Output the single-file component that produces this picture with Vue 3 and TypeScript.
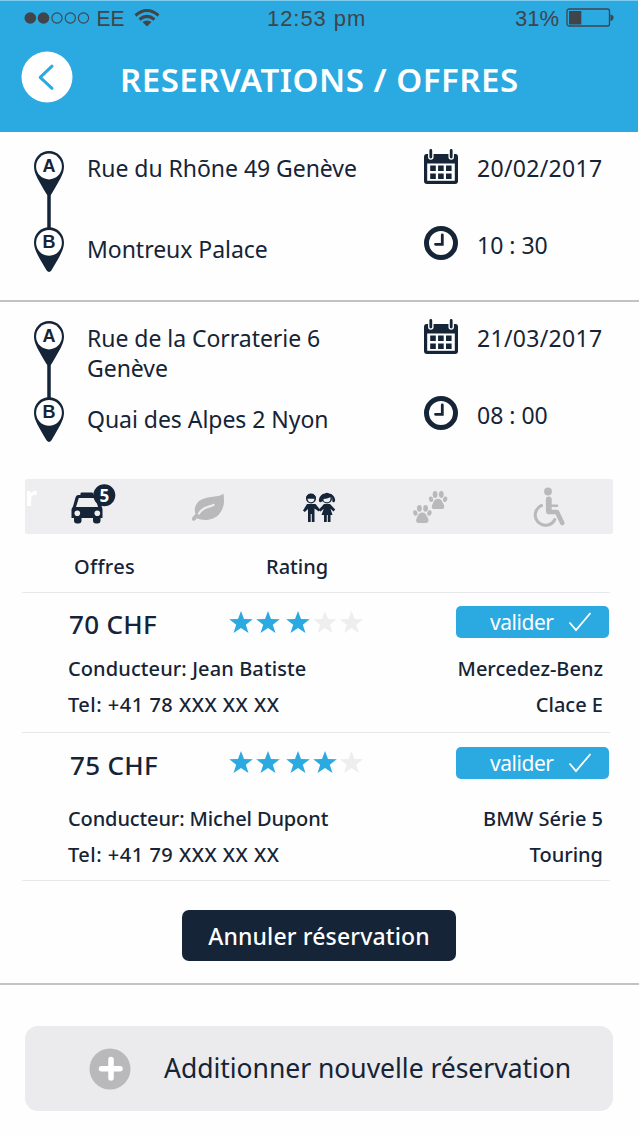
<script setup lang="ts">
interface Trip {
  from: string[]
  to: string
  date: string
  time: string
}

interface Offer {
  price: string
  rating: number
  driver: string
  phone: string
  car: string
  model: string
}

const trips: Trip[] = [
  { from: ['Rue du Rhõne 49 Genève'], to: 'Montreux Palace', date: '20/02/2017', time: '10 : 30' },
  { from: ['Rue de la Corraterie 6', 'Genève'], to: 'Quai des Alpes 2 Nyon', date: '21/03/2017', time: '08 : 00' },
]

const offers: Offer[] = [
  { price: '70 CHF', rating: 3, driver: 'Jean Batiste', phone: '+41 78 XXX XX XX', car: 'Mercedez-Benz', model: 'Clace E' },
  { price: '75 CHF', rating: 4, driver: 'Michel Dupont', phone: '+41 79 XXX XX XX', car: 'BMW Série 5', model: 'Touring' },
]

const starCentres = [12, 39, 69, 96, 122.5]
const star = 'M0-12 3-4 11.8-3.8 4.8 1.7 7.5 10 0 5 -7.5 10-4.8 1.7-11.8-3.8-3-4Z'
</script>

<template>
  <main class="screen">
    <header class="header">
      <div class="status">
        <svg class="signal" viewBox="0 0 160 36">
          <g fill="#414449">
            <circle cx="30.3" cy="18" r="5.8" />
            <circle cx="43.5" cy="18" r="5.8" />
          </g>
          <g fill="none" stroke="#414449" stroke-width="1.1">
            <circle cx="57" cy="18" r="5.1" />
            <circle cx="70.3" cy="18" r="5.1" />
            <circle cx="83.5" cy="18" r="5.1" />
          </g>
          <text x="96.500" y="26" textLength="28" lengthAdjust="spacingAndGlyphs">EE</text>
          <g fill="none" stroke="#414449" stroke-width="3">
            <path d="M135.500 15.500Q147 5.500 158.500 15.500" />
            <path d="M139.500 19.500Q147 13.300 154.500 19.500" />
          </g>
          <path d="M142.500 22Q147 18.800 151.500 22L147 26.500Z" fill="#414449" />
        </svg>
        <span class="clock-text">12:53 pm</span>
        <span class="percent">31%</span>
        <svg class="battery" viewBox="0 0 49 20">
          <rect x="1" y="1" width="42.500" height="17" rx="2" fill="none" stroke="#414449" stroke-width="1.300" />
          <rect x="3" y="3" width="12.300" height="13.500" fill="#414449" />
          <path d="M44.500 6.500Q47.600 7 47.600 9.600T44.500 13Z" fill="#414449" />
        </svg>
      </div>
      <div class="titlebar">
        <svg class="back" viewBox="0 0 52 52">
          <circle cx="26" cy="26" r="25.500" fill="#fff" />
          <path d="M31 15.200 19.200 26.300 31 37.300" fill="none" stroke="#2ba9e1" stroke-width="3" stroke-linecap="round" stroke-linejoin="round" />
        </svg>
        <h1>RESERVATIONS / OFFRES</h1>
      </div>
    </header>

    <section v-for="(trip, i) in trips" :key="i" class="trip" :class="{ first: i === 0 }">
      <svg class="route" viewBox="0 0 32 122">
        <path d="M16 40V80" stroke="#152436" stroke-width="3.500" />
        <g v-for="(letter, n) in ['A', 'B']" :key="letter" :transform="`translate(0 ${n * 76.300})`">
          <path d="M16 0C7.500 0 1 6.700 1 15.500C1 23 6 30 13.500 43Q16 46.500 18.500 43C26 30 31 23 31 15.500C31 6.700 24.500 0 16 0Z" fill="#152436" />
          <circle cx="16" cy="15.500" r="12.900" fill="#fff" />
          <text x="16" y="21" text-anchor="middle">{{ letter }}</text>
        </g>
      </svg>
      <div class="places">
        <div class="from"><div v-for="line in trip.from" :key="line">{{ line }}</div></div>
        <div>{{ trip.to }}</div>
      </div>
      <div class="icons">
        <svg viewBox="0 0 36 36" width="36" height="36">
          <path d="M3.500 5H32.500Q35 5 35 8V32Q35 35 32 35H4Q1 35 1 32V8Q1 5 3.500 5Z" fill="#152436" />
          <path d="M4.200 14.500H31.800V31.800H4.200Z" fill="#fff" />
          <g stroke-linecap="round" fill="none">
            <path d="M7.800 2V8M28.200 2V8" stroke="#fff" stroke-width="5.500" />
            <path d="M7.800 1.500V8M28.200 1.500V8" stroke="#152436" stroke-width="2.800" />
          </g>
          <path d="M7.200 16.500h5.600v5.500H7.200zm7.900 0h5.600v5.500h-5.600zm7.900 0h5.600v5.500H23zM7.200 24.500h5.600v5.500H7.200zm7.900 0h5.600v5.500h-5.600zm7.900 0h5.600v5.500H23z" fill="#152436" />
        </svg>
        <svg viewBox="0 0 36 36" width="36" height="36">
          <circle cx="18" cy="18" r="14.500" fill="none" stroke="#152436" stroke-width="5" />
          <path d="M19.300 10V19.300H12.500" fill="none" stroke="#152436" stroke-width="2.800" stroke-linecap="round" />
        </svg>
      </div>
      <div class="when">
        <div class="date">{{ trip.date }}</div>
        <div class="time">{{ trip.time }}</div>
      </div>
    </section>

    <nav class="options">
      <svg viewBox="25 479 125 55">
        <text class="cut" x="25" y="506">r</text>
        <g fill="#152436">
          <path d="M80.500 496V493.500Q80.500 492.500 82 492.500H92Q93.500 492.500 93.500 494V496Z" />
          <path d="M78 495H96Q98.500 495 99.300 497L101.500 506Q102.500 508 102.500 510V518H71.500V510Q71.500 508 73 506.500L75.500 497.500Q76.200 495 78 495Z" />
          <rect x="74" y="514" width="7.500" height="9.500" rx="3" />
          <rect x="93" y="514" width="7.500" height="9.500" rx="3" />
        </g>
        <path d="M78.800 498H95.500L98 507H76Z" fill="#eeedf0" />
        <circle cx="77.300" cy="513.300" r="2.800" fill="#eeedf0" />
        <circle cx="97.300" cy="513.300" r="2.800" fill="#eeedf0" />
        <circle cx="104.300" cy="495.300" r="11" fill="#152436" />
        <text class="badge" x="104.300" y="502" text-anchor="middle">5</text>
      </svg>
      <svg viewBox="150 479 115 55">
        <path d="M223.500 493.500C220 498 207 495 199 501C194.500 505.500 194 510 195.500 514L192.500 517Q191 520 193.500 521Q195.500 521 196.800 518.300C204 521.500 215 520.500 220 513C224.500 507 224.500 501 223.500 493.500Z" fill="#b9b8bb" />
        <path d="M199 513.500C203 506.500 208 507.500 213.500 505" fill="none" stroke="#eeedf0" stroke-width="2.200" stroke-linecap="round" />
      </svg>
      <svg viewBox="265 479 110 55">
        <g fill="#152436">
          <circle cx="311" cy="498.500" r="5" />
          <path d="M306 500Q305.500 494 311 494Q316.500 494 316 500L315 497.500H307Z" />
          <path d="M307 504H315.500L320 509.500 318.800 511.500 314.500 508.500V522H311.800V514H310.700V522H308V509L304.800 512 303 510.500Z" />
          <circle cx="327" cy="498.500" r="5" />
          <path d="M321 502Q319 503 318.800 500Q320 494 325 493.500Q327 492 329 493.500Q334 494 335.200 500Q335 503 332.500 502L332 497Z" />
          <path d="M324 504H330L335.200 509.500 333.500 511.500 330.500 508.800 332.500 515H330.500V522H327.800V515H326.800V522H324V515H321.500L323.800 508.800 320.500 511.500 318.500 510Z" />
        </g>
        <path d="M307.500 498.800H314.500Q314 502.300 311 502.300T307.500 498.800ZM323.500 499Q327 499 330.500 497.200Q331 502.300 327 502.300T323.500 499Z" fill="#eeedf0" />
      </svg>
      <svg viewBox="375 479 120 55">
        <g v-for="p in [{ x: 438, y: 499.500 }, { x: 422.300, y: 513.300 }]" :key="p.x" :transform="`translate(${p.x} ${p.y})`" fill="#b9b8bb">
          <ellipse cx="-2.900" cy="-5" rx="2.400" ry="3.400" />
          <ellipse cx="3.300" cy="-5" rx="2.400" ry="3.400" />
          <ellipse cx="-7" cy="-.3" rx="2.100" ry="2.800" transform="rotate(-15 -7 -.5)" />
          <ellipse cx="7.200" cy="-.3" rx="2.100" ry="2.800" transform="rotate(15 7.200 -.5)" />
          <path d="M0-.7C3.500-.7 4 2.200 5.500 4.500C7 7.500 6 9.800 3.500 9.600H-3.500C-6 9.800-7 7.500-5.400 4.500C-4 2.200-3.500-.7 0-.7Z" />
        </g>
      </svg>
      <svg viewBox="495 479 118 55">
        <circle cx="548" cy="491.500" r="3.900" fill="#b9b8bb" />
        <g fill="none" stroke="#b9b8bb" stroke-linecap="round" stroke-linejoin="round">
          <path d="M548.500 500V512H557L562.300 523" stroke-width="4.600" />
          <path d="M548.800 499.500V510" stroke-width="5.800" />
          <path d="M551 505.700H557" stroke-width="2.600" />
          <path d="M541.500 505.500A10.300 10.300 0 1 0 554.800 519.500" stroke-width="3" />
        </g>
      </svg>
    </nav>

    <section class="offers">
      <div class="columns"><span class="c-offers">Offres</span><span>Rating</span></div>
      <article v-for="(offer, i) in offers" :key="offer.price" class="offer" :class="{ tall: i === 1 }">
        <div class="summary">
          <strong class="price">{{ offer.price }}</strong>
          <svg class="stars" viewBox="0 0 136 26">
            <path v-for="(cx, n) in starCentres" :key="cx" :d="star" :transform="`translate(${cx} 14)`" :fill="n < offer.rating ? '#2ba9e1' : '#eeedf0'" />
          </svg>
          <button class="validate">
            <span>valider</span>
            <svg viewBox="0 0 24 20" width="24" height="20"><path d="M1.500 10.500 8 18 22.500 1" fill="none" stroke="#fff" stroke-width="1.800" /></svg>
          </button>
        </div>
        <div class="details">
          <div><span class="driver">Conducteur: {{ offer.driver }}</span><span>{{ offer.car }}</span></div>
          <div><span class="phone">Tel: {{ offer.phone }}</span><span>{{ offer.model }}</span></div>
        </div>
      </article>
    </section>

    <div class="cancel-area"><button class="cancel">Annuler réservation</button></div>

    <footer class="footer">
      <button class="add">
        <svg viewBox="0 0 42 42" width="42" height="42">
          <circle cx="21" cy="21" r="20.500" fill="#b9b8bb" />
          <path d="M22 11.500V30M12.500 20.700H31" stroke="#fff" stroke-width="5.500" stroke-linecap="round" />
        </svg>
        <span>Additionner nouvelle réservation</span>
      </button>
    </footer>
  </main>
</template>

<style>
body {
  margin: 0;
  background: #fefefe;
}
</style>

<style scoped>
.screen {
  width: 639px;
  height: 1136px;
  overflow: hidden;
  background: #fefefe;
  color: #152436;
  font-family: "Noto Sans", "Open Sans", sans-serif;
  white-space: nowrap;
}
svg { display: block; flex: none; }
button {
  border: 0;
  padding: 0;
  font-family: inherit;
  color: inherit;
}
.header {
  box-sizing: border-box;
  width: 638px;
  height: 132px;
  background: #2ba9e1;
  border-top: 1px solid #7acbed;
}
.status {
  display: flex;
  height: 36px;
  margin-top: -1px;
  color: #414449;
  font: 22px/37px "Liberation Sans", sans-serif;
}
.signal { width: 160px; height: 36px; }
.signal text { font: 22.500px "Liberation Sans", sans-serif; fill: #414449; }
.clock-text { width: 248px; margin-left: 107px; letter-spacing: .95px; }
.percent { width: 51px; letter-spacing: 0; }
.battery { width: 49px; height: 20px; margin-top: 8px; }
.titlebar { display: flex; padding: 15px 0 0 21px; }
.back { width: 52px; height: 52px; }
h1 {
  margin: 6px 0 0 47px;
  font-size: 33px;
  line-height: 45px;
  font-weight: 600;
  color: #fff;
  letter-spacing: .52px;
}
.trip {
  box-sizing: border-box;
  display: flex;
  height: 170px;
  padding: 17px 0 0 33px;
  font-size: 23px;
  line-height: 29.500px;
}
.trip.first { border-bottom: 2px solid #c3c3c5; }
.route { width: 32px; height: 122px; margin-top: 2px; }
.route text { font: bold 18px "Liberation Sans", sans-serif; fill: #152436; }
.places { width: 336px; padding: 5px 0 0 22px; letter-spacing: -.04px; }
.from { height: 81px; }
.icons { display: flex; flex-direction: column; gap: 40px; width: 36px; }
.when { padding: 5px 0 0 18px; }
.date { height: 77px; letter-spacing: .3px; }

.options {
  display: grid;
  grid-template-columns: 125px 115px 110px 120px 118px;
  width: 588px;
  height: 55px;
  margin: 7px 0 0 25px;
  background: #eeedf0;
  border-radius: 2px;
}
.options svg { width: 100%; height: 55px; overflow: visible; }
.cut { font: bold 27px "Noto Sans", sans-serif; fill: #fff; }
.badge { font: bold 17px "Noto Sans", sans-serif; fill: #fff; }

.offers { width: 588px; margin-left: 22px; font-weight: 500; }
.columns {
  display: flex;
  height: 58px;
  border-bottom: 1px solid #e8e7eb;
  font-size: 20px;
  line-height: 66px;
}
.c-offers { width: 192px; padding-left: 52px; letter-spacing: .3px; }
.offer {
  box-sizing: border-box;
  height: 140px;
  border-bottom: 1px solid #e8e7eb;
}
.offer.tall { height: 148px; }
.summary { display: flex; height: 58px; align-items: flex-start; padding-top: 13px; box-sizing: border-box; }
.price {
  width: 160px;
  padding-left: 47px;
  font-size: 26px;
  line-height: 37px;
  font-weight: 500;
  letter-spacing: .3px;
}
.tall .price { width: 159px; padding: 1px 0 0 48px; }
.stars { width: 136px; height: 26px; margin-top: 3px; }
.validate {
  display: flex;
  align-items: center;
  width: 153px;
  height: 32px;
  margin-left: 91px;
  background: #2ba9e1;
  border-radius: 5px;
  color: #fff;
  font-size: 21px;
  line-height: 32px;
  letter-spacing: -.45px;
}
.tall .validate { margin-top: 1px; }
.validate span { width: 78px; padding-left: 34px; text-align: left; }
.details { font-size: 20px; line-height: 36px; }
.details div { display: flex; justify-content: space-between; padding: 0 7px 0 46px; }
.driver { letter-spacing: .1px; }
.tall .driver { letter-spacing: -.12px; }
.phone { letter-spacing: .5px; }
.tall .details { padding-top: 10px; }
.cancel-area {
  box-sizing: border-box;
  height: 104px;
  padding: 29px 0 0 182px;
  border-bottom: 2px solid #c3c3c5;
}
.cancel {
  width: 274px;
  height: 51px;
  background: #152436;
  border-radius: 7px;
  color: #fff;
  font-size: 23px;
  font-weight: 500;
  letter-spacing: .15px;
}
.footer { padding: 41px 0 0 25px; }
.add {
  display: flex;
  align-items: center;
  width: 588px;
  height: 85px;
  padding-left: 64px;
  background: #ebeaec;
  border-radius: 13px;
  font-size: 26.500px;
}
.add span { margin: -2px 0 0 33px; letter-spacing: -.03px; }
</style>
